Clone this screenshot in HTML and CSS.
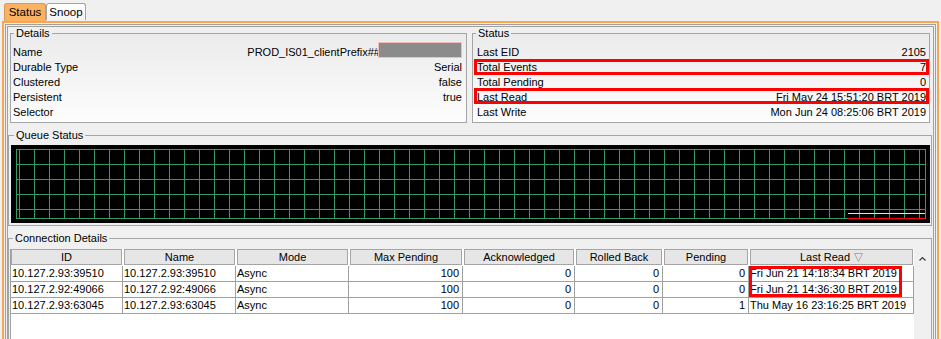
FILE: index.html
```html
<!DOCTYPE html>
<html>
<head>
<meta charset="utf-8">
<link rel="stylesheet" href="styles.css">
</head>
<body>
<div class="tabs">
  <div class="tab tab-active">Status</div>
  <div class="tab">Snoop</div>
</div>
<div class="frame">
  <div class="panel">
    <div class="top">
      <fieldset class="group grad">
        <legend>Details</legend>
        <div class="rows details-rows">
          <div class="kv"><span>Name</span><span class="val">PROD_IS01_clientPrefix##<span class="redact"></span></span></div>
          <div class="kv"><span>Durable Type</span><span>Serial</span></div>
          <div class="kv"><span>Clustered</span><span>false</span></div>
          <div class="kv"><span>Persistent</span><span>true</span></div>
          <div class="kv"><span>Selector</span><span></span></div>
        </div>
      </fieldset>
      <fieldset class="group grad">
        <legend>Status</legend>
        <div class="rows status-rows">
          <div class="kv"><span>Last EID</span><span>2105</span></div>
          <div class="kv"><span>Total Events</span><span>7</span><span class="hl"></span></div>
          <div class="kv"><span>Total Pending</span><span>0</span></div>
          <div class="kv"><span>Last Read</span><span>Fri May 24 15:51:20 BRT 2019</span><span class="hl hl-up"></span></div>
          <div class="kv"><span>Last Write</span><span>Mon Jun 24 08:25:06 BRT 2019</span></div>
        </div>
      </fieldset>
    </div>

    <fieldset class="group queue">
      <legend>Queue Status</legend>
      <div class="chart">
        <svg width="919" height="78" viewBox="0 0 919 78">
          <path fill="none" stroke="#339966" stroke-width="1" d="M5 4.5H915M5 19.5H915M5 34.5H915M5 49.5H915M5 64.5H915M5 73.5H915M5.5 4V74M914.5 4V74M8.5 4V74M23.5 4V74M38.5 4V74M53.5 4V74M68.5 4V74M83.5 4V74M98.5 4V74M113.5 4V74M128.5 4V74M143.5 4V74M158.5 4V74M173.5 4V74M188.5 4V74M203.5 4V74M218.5 4V74M233.5 4V74M248.5 4V74M263.5 4V74M278.5 4V74M293.5 4V74M308.5 4V74M323.5 4V74M338.5 4V74M353.5 4V74M368.5 4V74M383.5 4V74M398.5 4V74M413.5 4V74M428.5 4V74M443.5 4V74M458.5 4V74M473.5 4V74M488.5 4V74M503.5 4V74M518.5 4V74M533.5 4V74M548.5 4V74M563.5 4V74M578.5 4V74M593.5 4V74M608.5 4V74M623.5 4V74M638.5 4V74M653.5 4V74M668.5 4V74M683.5 4V74M698.5 4V74M713.5 4V74M728.5 4V74M743.5 4V74M758.5 4V74M773.5 4V74M788.5 4V74M803.5 4V74M818.5 4V74M833.5 4V74M848.5 4V74M863.5 4V74M878.5 4V74M893.5 4V74M908.5 4V74"/>
          <path stroke="#ffff00" stroke-width="1" d="M837 68.5H914"/>
          <path stroke="#ff0000" stroke-width="1" d="M837 73.5H914"/>
        </svg>
      </div>
    </fieldset>

    <fieldset class="group conn">
      <legend>Connection Details</legend>
      <div class="tablewrap">
        <div class="viewport">
          <div class="grid head">
            <div class="hc">ID</div>
            <div class="hc">Name</div>
            <div class="hc">Mode</div>
            <div class="hc">Max Pending</div>
            <div class="hc">Acknowledged</div>
            <div class="hc">Rolled Back</div>
            <div class="hc">Pending</div>
            <div class="hc">Last Read<svg class="sort" width="9" height="9" viewBox="0 0 9 9"><path d="M0.5 0.5H8.5L4.5 8.5Z" fill="none" stroke="#a8a8a8" stroke-width="1"/></svg></div>
          </div>
          <div class="grid">
            <div class="c">10.127.2.93:39510</div>
            <div class="c">10.127.2.93:39510</div>
            <div class="c">Async</div>
            <div class="c num">100</div>
            <div class="c num">0</div>
            <div class="c num">0</div>
            <div class="c num">0</div>
            <div class="c lr">Fri Jun 21 14:18:34 BRT 2019<span class="hl-t"></span></div>
          </div>
          <div class="grid">
            <div class="c">10.127.2.92:49066</div>
            <div class="c">10.127.2.92:49066</div>
            <div class="c">Async</div>
            <div class="c num">100</div>
            <div class="c num">0</div>
            <div class="c num">0</div>
            <div class="c num">0</div>
            <div class="c lr">Fri Jun 21 14:36:30 BRT 2019</div>
          </div>
          <div class="grid">
            <div class="c">10.127.2.93:63045</div>
            <div class="c">10.127.2.93:63045</div>
            <div class="c">Async</div>
            <div class="c num">100</div>
            <div class="c num">0</div>
            <div class="c num">0</div>
            <div class="c num">1</div>
            <div class="c lr">Thu May 16 23:16:25 BRT 2019</div>
          </div>
        </div>
        <div class="scrollbar">
          <svg width="7" height="5" viewBox="0 0 7 5"><path d="M0.5 4.5L3.5 1.5L6.5 4.5" fill="none" stroke="#3a3a3a" stroke-width="1.2"/></svg>
        </div>
      </div>
    </fieldset>
  </div>
</div>
</body>
</html>
```

FILE: styles.css
```css
* { box-sizing: border-box; }

body {
  margin: 0;
  width: 941px;
  height: 339px;
  overflow: hidden;
  background: #f0f0f0;
  font-family: "Liberation Sans", Arial, sans-serif;
  font-size: 11px;
  line-height: 15px;
  color: #000;
}

.tabs {
  display: flex;
  align-items: flex-end;
  height: 21px;
  padding-left: 4px;
}

.tab {
  width: 40px;
  height: 17px;
  margin-bottom: 1px;
  border: 1px solid #a3a3a3;
  border-bottom: none;
  border-radius: 3px 3px 0 0;
  background: linear-gradient(#ffffff, #f2f2f2);
  text-align: center;
  line-height: 16px;
  font-size: 11.5px;
}

.tab-active {
  width: 42px;
  height: 18px;
  margin-bottom: 0;
  background: #fab262;
  border-color: #d99a55;
}

.frame {
  margin-left: 2px;
  width: 937px;
  height: 340px;
  border: 2px solid #f8a64f;
  padding: 1px;
}

.panel {
  height: 100%;
  border: 3px double #a0a0a0;
}

.top {
  display: grid;
  grid-template-columns: 457px 458px;
  column-gap: 5px;
  padding: 0 3px 0 2px;
}

fieldset.group {
  margin: 0;
  padding: 0;
  min-width: 0;
  border: 1px solid #a5a5a5;
}

legend {
  margin-left: 3px;
  padding: 0 2px;
  line-height: 13px;
}

.grad {
  background: linear-gradient(#ebebeb, #fdfdfd);
}

.rows {
  padding-top: 5px;
  padding-bottom: 2px;
}

.details-rows { padding-left: 2px; padding-right: 4px; }
.status-rows { padding-left: 4px; padding-right: 3px; }

.kv {
  position: relative;
  display: flex;
  justify-content: space-between;
  height: 15px;
  white-space: nowrap;
}

.val { position: relative; }

.redact {
  position: relative;
  top: -3px;
  display: inline-block;
  vertical-align: top;
  width: 84px;
  height: 16px;
  margin-left: -2px;
  background: #8b8b8b;
  border: 1px solid #f3bcbc;
}

.hl {
  position: absolute;
  left: -3px;
  right: -3px;
  top: -1px;
  bottom: 0;
  border: 3px solid #ff0000;
}

.hl-up {
  top: -2px;
  bottom: 1px;
}

.queue {
  margin: 6px 1px 0 0 !important;
  padding: 3px 1px 2px 2px !important;
}

.chart {
  height: 78px;
  background: #000;
}

.chart svg { display: block; }

.conn {
  margin: 6px 1px 0 0 !important;
  padding: 4px 0 0 1px !important;
}

.tablewrap {
  display: flex;
  height: 100px;
}

.viewport {
  width: 904px;
  border-left: 1px solid #a0a0a0;
  background: #ffffff;
}

.grid {
  display: grid;
  grid-template-columns: 112px 113px 113px 114px 112px 88px 86px 165px;
}

.head {
  height: 17px;
}

.hc {
  height: 16px;
  margin: 0 1px;
  border: 1px solid #a5a5a5;
  background: #e6e6e6;
  text-align: center;
  line-height: 14px;
  white-space: nowrap;
}

.hc:first-child { margin-left: 0; }

.sort {
  display: inline-block;
  margin-left: 4px;
  vertical-align: -1px;
}

.c {
  position: relative;
  height: 16px;
  padding: 0 2px 0 1px;
  border-right: 1px solid #a0a0a0;
  border-bottom: 1px solid #a0a0a0;
  line-height: 15px;
  white-space: nowrap;
}

.num {
  text-align: right;
  padding-right: 3px;
}

.hl-t {
  position: absolute;
  z-index: 2;
  left: 0;
  top: 0;
  width: 153px;
  height: 31px;
  border: 3px solid #ff0000;
}

.scrollbar {
  flex: 1;
  display: flex;
  justify-content: center;
  padding-top: 7px;
  background: #f0f0f0;
}

.scrollbar svg { display: block; }
```
